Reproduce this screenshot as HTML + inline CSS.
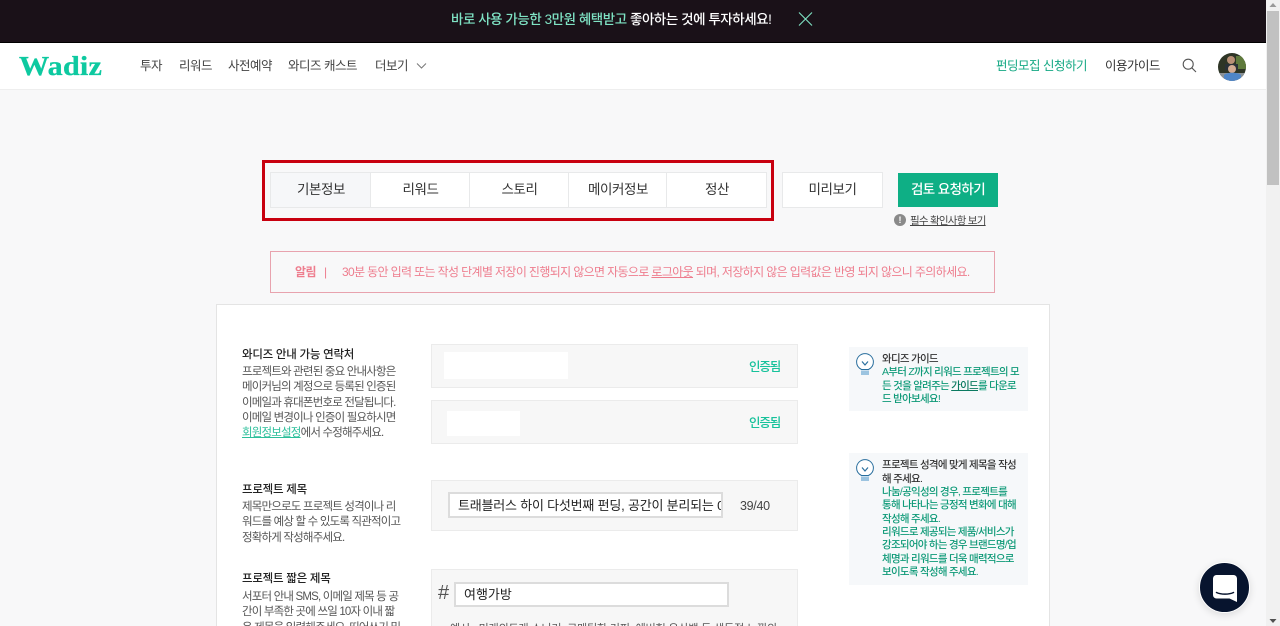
<!DOCTYPE html>
<html lang="ko">
<head>
<meta charset="utf-8">
<title>Wadiz</title>
<style>
html,body{margin:0;padding:0;width:1280px;height:626px;overflow:hidden;background:#f8f8f9;}
body{font-family:"Liberation Sans","Noto Sans CJK KR",sans-serif;color:#222;position:relative;}
.a{position:absolute;white-space:nowrap;}
.box{position:absolute;box-sizing:border-box;}
.d{font-size:11.5px;color:#555;letter-spacing:-.82px;line-height:15px;}
.h{font-size:11.5px;color:#222;font-weight:500;letter-spacing:-.25px;line-height:15px;}
.tab{position:absolute;top:173px;height:34px;line-height:33px;text-align:center;font-size:13.5px;color:#333;letter-spacing:-.4px;box-sizing:border-box;border-right:1px solid #e8e9ea;padding-left:1px;}
.nav{font-size:12.5px;color:#444;letter-spacing:-.5px;top:58px;line-height:16px;}
.g{font-size:10.5px;color:#0f9a78;letter-spacing:-.72px;line-height:13.4px;font-weight:500;}
.gh{font-size:10.5px;color:#333;letter-spacing:-.72px;line-height:13.4px;font-weight:500;}
.panel{position:absolute;left:431px;width:367px;background:#f7f7f7;border:1px solid #ebebeb;box-sizing:border-box;}
.ok{font-size:12.5px;color:#17c29b;letter-spacing:-1.1px;font-weight:500;left:749px;line-height:16px;}
</style>
</head>
<body>
<div class="box" style="left:0;top:0;width:1266px;height:43px;background:#1a1118;border-bottom:1px solid #000;"></div>
<div class="a" style="left:451px;top:10px;font-size:13.5px;line-height:19px;letter-spacing:-.46px;color:#7fe3c4;font-weight:500;">바로 사용 가능한 3만원 혜택받고 <span style="color:#fff">좋아하는 것에 투자하세요!</span></div>
<svg class="a" style="left:798px;top:12px" width="15" height="14" viewBox="0 0 15 14"><path d="M1 .5L14 13.500M14 .5L1 13.500" stroke="#7fe3c4" stroke-width="1.100" fill="none"/></svg>

<div class="box" style="left:0;top:43px;width:1266px;height:47px;background:#fff;border-bottom:1px solid #eeeeee;"></div>
<div class="a" style="left:19px;top:49px;font-family:'Liberation Serif',serif;font-weight:700;font-size:27px;line-height:34px;color:#0dc9a0;letter-spacing:.2px;transform:scaleX(1.115);transform-origin:0 0;-webkit-text-stroke:.3px #0dc9a0;">Wadiz</div>
<div class="a nav" style="left:140px">투자</div>
<div class="a nav" style="left:179px">리워드</div>
<div class="a nav" style="left:228px">사전예약</div>
<div class="a nav" style="left:288px">와디즈 캐스트</div>
<div class="a nav" style="left:375px">더보기</div>
<svg class="a" style="left:416px;top:62px" width="11" height="8" viewBox="0 0 11 8"><path d="M1 1.500L5.500 6L10 1.500" stroke="#777" stroke-width="1" fill="none"/></svg>
<div class="a nav" style="left:996px;color:#16a884">펀딩모집 신청하기</div>
<div class="a nav" style="left:1105px;color:#333">이용가이드</div>
<svg class="a" style="left:1182px;top:58px" width="15" height="15" viewBox="0 0 15 15"><circle cx="6.200" cy="6.200" r="5" stroke="#555" stroke-width="1.100" fill="none"/><path d="M9.800 9.800L14 14" stroke="#555" stroke-width="1.100"/></svg>
<svg class="a" style="left:1218px;top:53px" width="28" height="28" viewBox="0 0 28 28"><defs><clipPath id="c"><circle cx="14" cy="14" r="14"/></clipPath></defs><g clip-path="url(#c)"><rect width="28" height="28" fill="#2e3526"/><rect x="18" y="3" width="10" height="13" fill="#5f7a3c"/><rect y="20" width="28" height="8" fill="#8b9296"/><circle cx="13" cy="7" r="4" fill="#b88f76"/><path d="M7 11h13v6H7z" fill="#2a3138"/><circle cx="14" cy="16" r="4" fill="#d3ab92"/><path d="M6 22c3-3 14-3 17 0v6H6z" fill="#4f86c8"/></g></svg>

<!-- scrollbar -->
<div class="box" style="left:1266px;top:0;width:14px;height:626px;background:#f1f1f1;"></div>
<div class="box" style="left:1267px;top:11px;width:12px;height:174px;background:#c1c1c1;"></div>
<svg class="a" style="left:1269px;top:2px" width="8" height="6"><path d="M4 1L7.500 5H.5z" fill="#9a9a9a"/></svg>
<svg class="a" style="left:1269px;top:618px" width="8" height="6"><path d="M4 5L7.500 1H.5z" fill="#505050"/></svg>

<!-- tabs -->
<div class="box" style="left:262px;top:160px;width:512px;height:61px;border:3px solid #c8000f;"></div>
<div class="box" style="left:270px;top:172px;width:497px;height:36px;background:#fff;border:1px solid #e8e9ea;"></div>
<div class="tab" style="left:271px;width:100px;background:#f6f7f9;">기본정보</div>
<div class="tab" style="left:371px;width:99px;">리워드</div>
<div class="tab" style="left:470px;width:99px;">스토리</div>
<div class="tab" style="left:569px;width:98px;">메이커정보</div>
<div class="tab" style="left:667px;width:99px;border-right:0;">정산</div>
<div class="box" style="left:782px;top:172px;width:101px;height:36px;background:#fff;border:1px solid #e8e9ea;text-align:center;font-size:13.5px;line-height:34px;color:#333;letter-spacing:-.45px;">미리보기</div>
<div class="box" style="left:898px;top:173px;width:100px;height:34px;background:#0eaf85;text-align:center;font-size:13.5px;line-height:33px;color:#fff;font-weight:500;letter-spacing:-.6px;">검토 요청하기</div>
<div class="a" style="left:894px;top:214px;width:12px;height:12px;border-radius:50%;background:#8a8a8a;color:#fff;font-size:9px;line-height:12px;text-align:center;font-weight:700;">!</div>
<div class="a" style="left:910px;top:214px;font-size:10.5px;line-height:14px;color:#444;letter-spacing:-.75px;text-decoration:underline;">필수 확인사항 보기</div>

<!-- notice -->
<div class="box" style="left:270px;top:251px;width:725px;height:42px;border:1px solid #e8a3ae;background:#f8f8f9;"></div>
<div class="a" style="left:295px;top:264px;font-size:12px;line-height:16px;color:#ee7d8e;font-weight:700;letter-spacing:-.5px;">알림</div>
<div class="a" style="left:324px;top:264px;font-size:12px;line-height:16px;color:#ee7d8e;">|</div>
<div class="a" style="left:342px;top:264px;font-size:12px;line-height:16px;color:#ee7d8e;letter-spacing:-.64px;">30분 동안 입력 또는 작성 단계별 저장이 진행되지 않으면 자동으로 <u>로그아웃</u> 되며, 저장하지 않은 입력값은 반영 되지 않으니 주의하세요.</div>

<!-- card -->
<div class="box" style="left:216px;top:304px;width:834px;height:330px;background:#fff;border:1px solid #e4e4e4;"></div>

<div class="a h" style="left:242px;top:348px;">와디즈 안내 가능 연락처</div>
<div class="a d" style="left:242px;top:365px;">프로젝트와 관련된 중요 안내사항은</div>
<div class="a d" style="left:242px;top:380px;">메이커님의 계정으로 등록된 인증된</div>
<div class="a d" style="left:242px;top:396px;">이메일과 휴대폰번호로 전달됩니다.</div>
<div class="a d" style="left:242px;top:411px;">이메일 변경이나 인증이 필요하시면</div>
<div class="a d" style="left:242px;top:426px;"><u style="color:#2bbf9a">회원정보설정</u>에서 수정해주세요.</div>

<div class="panel" style="top:344px;height:44px;"></div>
<div class="box" style="left:444px;top:352px;width:124px;height:27px;background:#fff;"></div>
<div class="a ok" style="top:359px;">인증됨</div>
<div class="panel" style="top:400px;height:44px;"></div>
<div class="box" style="left:447px;top:411px;width:73px;height:25px;background:#fff;"></div>
<div class="a ok" style="top:415px;">인증됨</div>

<div class="a h" style="left:242px;top:483px;">프로젝트 제목</div>
<div class="a d" style="left:242px;top:500px;">제목만으로도 프로젝트 성격이나 리</div>
<div class="a d" style="left:242px;top:515px;">워드를 예상 할 수 있도록 직관적이고</div>
<div class="a d" style="left:242px;top:531px;">정확하게 작성해주세요.</div>

<div class="panel" style="top:480px;height:51px;"></div>
<div class="box" style="left:448px;top:492px;width:275px;height:26px;background:#fff;border:2px solid #dcdcdc;overflow:hidden;"><div class="a" style="left:8px;top:3px;font-size:13px;line-height:18px;color:#222;letter-spacing:-.2px;">트래블러스 하이 다섯번째 펀딩, 공간이 분리되는 0</div></div>
<div class="a" style="left:740px;top:498px;font-size:12.500px;line-height:16px;color:#444;letter-spacing:-.3px;">39/40</div>

<div class="a h" style="left:242px;top:572px;">프로젝트 짧은 제목</div>
<div class="a d" style="left:242px;top:590px;">서포터 안내 SMS, 이메일 제목 등 공</div>
<div class="a d" style="left:242px;top:605px;">간이 부족한 곳에 쓰일 10자 이내 짧</div>
<div class="a d" style="left:242px;top:621px;">은 제목을 입력해주세요. 띄어쓰기 및</div>

<div class="panel" style="top:569px;height:70px;"></div>
<div class="a" style="left:438px;top:581px;font-size:20px;line-height:24px;color:#555;">#</div>
<div class="box" style="left:454px;top:582px;width:275px;height:25px;background:#fff;border:2px solid #dcdcdc;"><div class="a" style="left:8px;top:2px;font-size:13px;line-height:18px;color:#222;">여행가방</div></div>
<div class="a" style="left:450px;top:622px;font-size:11px;line-height:14px;color:#555;letter-spacing:-.15px;">예시 : 미래의도래 스니커, 로맨틱한 커피, 에버헝 우산백 등 생동적 느낌의</div>

<!-- guides -->
<div class="box" style="left:849px;top:347px;width:179px;height:64px;background:#f6f8fa;"></div>
<svg class="a" style="left:856px;top:353px" width="18" height="22" viewBox="0 0 18 22"><path d="M5.500 16.500C2.500 15 .6 12.500.6 9a8.400 8.400 0 0 1 16.800 0c0 3.500-1.900 6-4.900 7.500z" fill="#fff" stroke="#2a6f9e" stroke-width="1"/><path d="M6 8.500l3 3.500 3-3.500" stroke="#2a6f9e" stroke-width="1.200" fill="none"/><rect x="5" y="17.500" width="8" height="4.500" fill="#9cc4e0"/></svg>
<div class="a gh" style="left:882px;top:353px;">와디즈 가이드</div>
<div class="a g" style="left:882px;top:366px;">A부터 Z까지 리워드 프로젝트의 모</div>
<div class="a g" style="left:882px;top:379.500px;">든 것을 알려주는 <u style="color:#0b7a60">가이드</u>를 다운로</div>
<div class="a g" style="left:882px;top:393px;">드 받아보세요!</div>

<div class="box" style="left:849px;top:453px;width:179px;height:132px;background:#f6f8fa;"></div>
<svg class="a" style="left:856px;top:459px" width="18" height="22" viewBox="0 0 18 22"><path d="M5.500 16.500C2.500 15 .6 12.500.6 9a8.400 8.400 0 0 1 16.800 0c0 3.500-1.900 6-4.900 7.500z" fill="#fff" stroke="#2a6f9e" stroke-width="1"/><path d="M6 8.500l3 3.500 3-3.500" stroke="#2a6f9e" stroke-width="1.200" fill="none"/><rect x="5" y="17.500" width="8" height="4.500" fill="#9cc4e0"/></svg>
<div class="a gh" style="left:882px;top:459px;">프로젝트 성격에 맞게 제목을 작성</div>
<div class="a gh" style="left:882px;top:472.500px;">해 주세요.</div>
<div class="a g" style="left:882px;top:486px;">나눔/공익성의 경우, 프로젝트를</div>
<div class="a g" style="left:882px;top:499px;">통해 나타나는 긍정적 변화에 대해</div>
<div class="a g" style="left:882px;top:512.500px;">작성해 주세요.</div>
<div class="a g" style="left:882px;top:526px;">리워드로 제공되는 제품/서비스가</div>
<div class="a g" style="left:882px;top:539px;">강조되어야 하는 경우 브랜드명/업</div>
<div class="a g" style="left:882px;top:552.500px;">체명과 리워드를 더욱 매력적으로</div>
<div class="a g" style="left:882px;top:566px;">보이도록 작성해 주세요.</div>

<!-- chat -->
<div class="box" style="left:1199px;top:562px;width:51px;height:51px;border-radius:50%;background:#07142e;border:1px solid #fff;box-shadow:0 2px 8px rgba(0,0,0,.12);"></div>
<svg class="a" style="left:1213px;top:575px" width="24" height="27" viewBox="0 0 24 27"><path d="M3.500 0h17A3.500 3.500 0 0 1 24 3.500V27l-7.500-3.500h-13A3.500 3.500 0 0 1 0 20V3.500A3.500 3.500 0 0 1 3.500 0z" fill="#fff"/><path d="M3.500 17.500c4.500 2.200 12.500 2.200 17 0" stroke="#07142e" stroke-width="1.500" fill="none" stroke-linecap="round"/></svg>
</body>
</html>
